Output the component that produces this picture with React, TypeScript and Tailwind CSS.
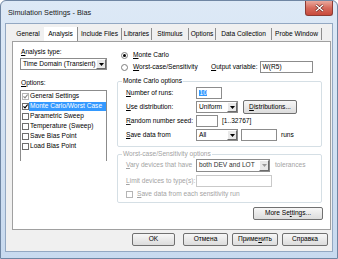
import type { ReactNode } from 'react';

const font = "font-['Liberation_Sans',Arial,sans-serif]";

type Props = { className?: string; children?: ReactNode; disabled?: boolean };

function U({ children }: { children: ReactNode }) {
    return <span className="underline underline-offset-[1px]">{children}</span>;
}

function Arrow({ disabled = false }: { disabled?: boolean }) {
    return (
        <div className="flex h-full w-[10px] items-center justify-center border border-t-white border-l-white border-r-[#6b6b6b] border-b-[#6b6b6b] bg-[#e9e9e9]">
            <svg width="5" height="3" viewBox="0 0 5 3">
                <path d="M0 0h5L2.5 3z" fill={disabled ? '#9a9a9a' : '#000'} />
            </svg>
        </div>
    );
}

function ComboBox({ className = '', children, disabled }: Props) {
    return (
        <div className={`flex items-stretch border border-[#8c8c8c] bg-white ${className}`}>
            <span className={`flex flex-1 items-center pl-[2px] ${disabled ? 'text-[#303030]' : ''}`}>{children}</span>
            <Arrow disabled={disabled} />
        </div>
    );
}

function TextBox({ className = '', children, disabled }: Props) {
    return (
        <div className={`flex h-[12px] items-center border pl-[2px] ${disabled ? 'border-[#c9c9c9] bg-white' : 'border-[#8c8c8c] bg-white'} ${className}`}>
            {children}
        </div>
    );
}

function Button({ className = '', children }: Props) {
    return (
        <div className={`flex items-center justify-center rounded-[2px] border border-[#707070] bg-linear-to-b from-[#f7f7f7] to-[#dcdcdc] ${className}`}>
            {children}
        </div>
    );
}

function Radio({ checked = false }: { checked?: boolean }) {
    return (
        <div className="flex h-[7px] w-[7px] items-center justify-center rounded-full border border-[#7d7d7d] bg-white">
            {checked && <div className="h-[3px] w-[3px] rounded-full bg-black" />}
        </div>
    );
}

function Check({ checked = false, disabled = false }: { checked?: boolean; disabled?: boolean }) {
    return (
        <div className={`flex h-[7px] w-[7px] shrink-0 items-center justify-center border bg-white ${disabled ? 'border-[#b5b5b5]' : 'border-[#6e6e6e]'}`}>
            {checked && (
                <svg width="5" height="5" viewBox="0 0 5 5">
                    <path d="M0.5 2.3l1.5 1.6 2.6-3.4" stroke={disabled ? '#8a8a8a' : '#000'} strokeWidth="1.1" fill="none" />
                </svg>
            )}
        </div>
    );
}

const tabs = [
    { name: 'General', w: 'w-[32px]' },
    { name: 'Analysis', w: 'w-[34px]' },
    { name: 'Include Files', w: 'w-[44px]' },
    { name: 'Libraries', w: 'w-[30px]' },
    { name: 'Stimulus', w: 'w-[37px]' },
    { name: 'Options', w: 'w-[27px]' },
    { name: 'Data Collection', w: 'w-[56px]' },
    { name: 'Probe Window', w: 'w-[50px]' },
];

const options = [
    { name: 'General Settings', checked: true, disabled: true },
    { name: 'Monte Carlo/Worst Case', checked: true, selected: true },
    { name: 'Parametric Sweep' },
    { name: 'Temperature (Sweep)' },
    { name: 'Save Bias Point' },
    { name: 'Load Bias Point' },
];

export default function App() {
    return (
        <div className={`h-[259px] w-[338px] overflow-hidden bg-white ${font} text-[6.6px] leading-none text-black`}>
            <div className="flex h-full w-full flex-col rounded-t-[6px] border border-[#6f86a3] bg-linear-to-b from-[#dde9f6] to-[#c8daef]">
                {/* Title bar */}
                <div className="flex h-[22px] items-start justify-between">
                    <span className="ml-[7px] mt-[8px] text-[7.3px] text-[#1a1a1a]">Simulation Settings - Bias</span>
                    <div className="mr-[4px] flex h-[15px] w-[28px] items-center justify-center rounded-b-[3px] border border-t-0 border-[#8c3b33] bg-linear-to-b from-[#e9a99d] via-[#d66a5c] to-[#c84a3b]">
                        <svg width="9" height="8" viewBox="0 0 9 8">
                            <path d="M1 1l7 6M8 1L1 7" stroke="#5a1d17" strokeWidth="2.4" />
                            <path d="M1 1l7 6M8 1L1 7" stroke="#fff" strokeWidth="1.4" />
                        </svg>
                    </div>
                </div>

                {/* Client area */}
                <div className="mx-[4px] flex h-[229px] flex-col border border-[#93a8c2] bg-[#f0f0f0]">
                    {/* Tabs */}
                    <div className="ml-[6px] mt-[3px] flex h-[14px] items-center">
                        {tabs.map((t, i) => (
                            <div
                                key={t.name}
                                className={`flex h-[12px] items-center justify-center ${t.w} ${i > 0 ? 'border-r border-[#8d8d8d]' : ''} ${i === 1 ? 'h-[14px] bg-white' : ''}`}
                            >
                                {t.name}
                            </div>
                        ))}
                    </div>

                    {/* Tab page */}
                    <div className="ml-[6px] flex h-[189px] w-[319px] border border-[#a0a0a0] bg-white">
                        {/* Left column */}
                        <div className="ml-[7px] flex w-[87px] flex-col">
                            <div className="mt-[5px] flex h-[10px] items-center pl-[1px]">
                                <U>A</U>nalysis type:
                            </div>
                            <ComboBox className="mt-[1px] h-[12px]">Time Domain (Transient)</ComboBox>
                            <div className="mt-[8px] flex h-[10px] items-center pl-[1px]">
                                <U>O</U>ptions:
                            </div>
                            <div className="mt-[2px] flex h-[71px] flex-col border border-b-0 border-[#8c8c8c] bg-white pl-[1px]">
                                {options.map((o) => (
                                    <div key={o.name} className="flex h-[10px] items-center">
                                        <Check checked={o.checked} disabled={o.disabled} />
                                        <span className={`flex h-[9px] flex-1 items-center pl-[1px] ${o.selected ? 'bg-[#3399ff] text-white' : ''}`}>
                                            {o.name}
                                        </span>
                                    </div>
                                ))}
                            </div>
                        </div>

                        {/* Right column */}
                        <div className="ml-[10px] flex w-[206px] flex-col">
                            <div className="mt-[7px] flex h-[12px] items-center">
                                <div className="ml-[4px] flex items-center gap-[5px]">
                                    <Radio checked />
                                    <span><U>M</U>onte Carlo</span>
                                </div>
                            </div>
                            <div className="flex h-[12px] items-center">
                                <div className="ml-[4px] flex w-[90px] items-center gap-[5px]">
                                    <Radio />
                                    <span><U>W</U>orst-case/Sensitivity</span>
                                </div>
                                <span><U>O</U>utput variable:</span>
                                <TextBox className="ml-[2px] h-[11px] w-[53px]">W(R5)</TextBox>
                            </div>

                            {/* Monte Carlo options */}
                            <fieldset className="mt-[4px] mr-[1px] rounded-[2px] border border-[#d5dfe5] pb-[4px] pt-[1px]">
                                <legend className="ml-[4px] h-[8px] px-[1px] leading-[8px]">Monte Carlo options</legend>
                                <div className="flex h-[14px] items-center pl-[8px]">
                                    <span className="w-[70px]"><U>N</U>umber of runs:</span>
                                    <TextBox className="w-[26px]">
                                        <span className="bg-[#3399ff] px-[0.5px] text-white">10</span>
                                    </TextBox>
                                </div>
                                <div className="flex h-[14px] items-center pl-[8px]">
                                    <span className="w-[70px]"><U>U</U>se distribution:</span>
                                    <ComboBox className="h-[12px] w-[42px]">Uniform</ComboBox>
                                    <Button className="ml-[5px] h-[14px] w-[54px]"><span><U>D</U>istributions...</span></Button>
                                </div>
                                <div className="flex h-[14px] items-center pl-[8px]">
                                    <span className="w-[70px]"><U>R</U>andom number seed:</span>
                                    <TextBox className="w-[22px]" />
                                    <span className="ml-[4px]">[1..32767]</span>
                                </div>
                                <div className="flex h-[14px] items-center pl-[8px]">
                                    <span className="w-[70px]"><U>S</U>ave data from</span>
                                    <ComboBox className="h-[12px] w-[42px]">All</ComboBox>
                                    <TextBox className="ml-[3px] w-[36px]" />
                                    <span className="ml-[4px]">runs</span>
                                </div>
                            </fieldset>

                            {/* Worst-case options (disabled) */}
                            <fieldset className="mt-[3px] mr-[1px] rounded-[2px] border border-[#d5dfe5] pb-[2px] text-[#a3a3a3]">
                                <legend className="ml-[4px] h-[8px] px-[1px] leading-[8px]">Worst-case/Sensitivity options</legend>
                                <div className="flex h-[14px] items-center pl-[8px]">
                                    <span className="w-[70px]"><U>V</U>ary devices that have</span>
                                    <ComboBox className="h-[13px] w-[74px]" disabled>both DEV and LOT</ComboBox>
                                    <span className="ml-[5px]">tolerances</span>
                                </div>
                                <div className="mt-[2px] flex h-[14px] items-center pl-[8px]">
                                    <span className="w-[70px]"><U>L</U>imit devices to type(s):</span>
                                    <TextBox className="w-[76px]" disabled />
                                </div>
                                <div className="flex h-[12px] items-center pl-[8px]">
                                    <Check disabled />
                                    <span className="ml-[4px]"><U>S</U>ave data from each sensitivity run</span>
                                </div>
                            </fieldset>

                            <Button className="mt-[4px] h-[13px] w-[70px] self-end">
                                <span>More Se<U>t</U>tings...</span>
                            </Button>
                        </div>
                    </div>

                    {/* Dialog buttons */}
                    <div className="mt-[3px] flex">
                        <Button className="ml-[126px] h-[13px] w-[43px]">OK</Button>
                        <Button className="ml-[8px] h-[13px] w-[45px]">Отмена</Button>
                        <Button className="ml-[4px] h-[13px] w-[46px]"><span>Приме<U>н</U>ить</span></Button>
                        <Button className="ml-[4px] h-[13px] w-[46px]">Справка</Button>
                    </div>
                </div>
            </div>
        </div>
    );
}
